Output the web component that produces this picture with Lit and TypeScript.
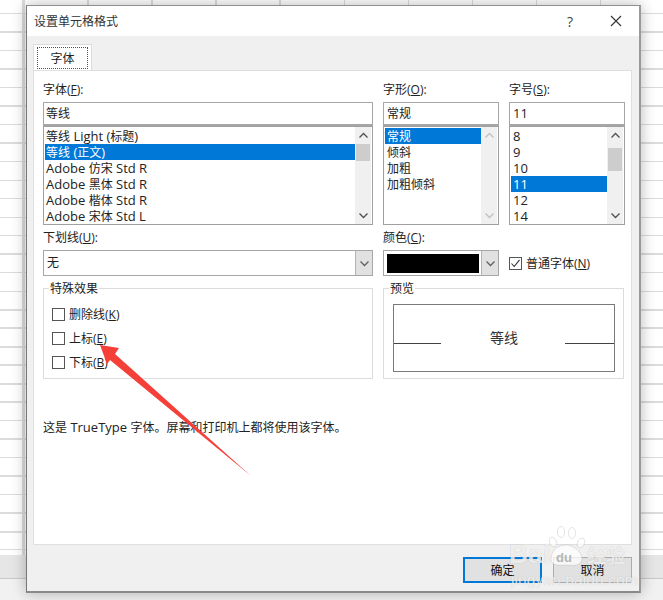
import { LitElement, html, css, svg } from "lit";
import { customElement } from "lit/decorators.js";

const chevron = (up: boolean, color = "#505050") => html`<svg class="chev" width="11" height="7" viewBox="0 0 11 7"><path d="${up ? "M1.5 5.5 L5.5 1.5 L9.5 5.5" : "M1.5 1.5 L5.5 5.5 L9.5 1.5"}" fill="none" stroke="${color}" stroke-width="1.3"/></svg>`;

const mixed = (t: string) =>
  (t.match(/[\x20-\x7e]+|[^\x20-\x7e]+/g) || []).map((run) =>
    /^[\x20-\x7e]/.test(run) ? html`<span class="lat">${run}</span>` : run
  );

@customElement("app-root")
export class AppRoot extends LitElement {
  static styles = css`
    :host {
      display: flex;
      box-sizing: border-box;
      position: relative;
      width: 663px;
      height: 600px;
      padding: 5px 22px 7px 26px;
      overflow: hidden;
      font-family: "Open Sans", "Noto Sans CJK SC", sans-serif;
      font-size: 12px;
      color: #222;
      background-color: #fff;
      background-image:
        linear-gradient(#f1f1f1, #f1f1f1),
        linear-gradient(#c8c8c8, #c8c8c8),
        linear-gradient(#e6e6e6, #e6e6e6),
        linear-gradient(#dcdcdc, #dcdcdc),
        repeating-linear-gradient(to bottom, transparent 0 13px, #dcdcdc 13px 14.5px, transparent 14.5px 18.5px);
      background-repeat: no-repeat;
      background-size: 100% 21px, 100% 1px, 100% 23px, 2px 555px, 100% 550px;
      background-position: 0 579px, 0 578px, 0 555px, 22px 0, 0 0;
    }
    .cols {
      position: absolute;
      inset: 0 0 45px 0;
      background-image: repeating-linear-gradient(to right, transparent 0 23px, #dcdcdc 23px 24.5px, transparent 24.5px 64.1px);
      pointer-events: none;
    }
    .lat { font-size: 13px; line-height: 1; }
    .dialog {
      position: relative;
      flex: 1;
      display: flex;
      flex-direction: column;
      background: #f0f0f0;
      border: 1px solid #8f8f8f;
      border-left-color: #777;
      border-bottom: 2px solid #8a8a8a;
      border-right: 2px solid #9a9a9a;
      box-shadow: 0 0 14px rgba(0, 0, 0, 0.28);
    }
    .titlebar {
      height: 30px;
      background: #fff;
      display: flex;
      align-items: center;
      padding: 0 17px 0 7px;
      color: #333;
    }
    .title { flex: 1; }
    .help { font-size: 14px; margin-right: 37px; color: #444; }
    .body { flex: 1; display: flex; flex-direction: column; padding: 8px 7px 0 6px; }
    .tabs { display: flex; height: 26px; }
    .tab {
      box-sizing: border-box;
      width: 59px;
      height: 26px;
      margin-bottom: -1px;
      background: #fff;
      border: 1px solid #dcdcdc;
      border-bottom: none;
      padding: 2px 3px 1px;
      position: relative;
      z-index: 1;
    }
    .tab span {
      display: flex;
      box-sizing: border-box;
      align-items: center;
      justify-content: center;
      width: 51px;
      height: 22px;
      border: 1px dotted #555;
    }
    .panel {
      box-sizing: border-box;
      height: 475px;
      background: #fff;
      border: 1px solid #dfdfdf;
      padding: 11px 0 0 9px;
    }
    .grid {
      display: grid;
      grid-template-columns: 330px 116px 116px;
      column-gap: 10px;
    }
    .label { line-height: 16px; height: 20px; white-space: nowrap; }
    .input {
      box-sizing: border-box;
      height: 24px;
      border: 1px solid #a6a6a6;
      border-bottom-width: 2px;
      padding-left: 3px;
      line-height: 21px;
    }
    .col1 .input { padding-left: 2px; }
    .list {
      box-sizing: border-box;
      height: 99px;
      border: 1px solid #a0a0a0;
      padding: 1px;
      display: flex;
    }
    .items { flex: 1; min-width: 0; }
    .item { height: 14px; padding-top: 2px; line-height: 14px; padding-left: 1px; white-space: nowrap; }
    .col2 .item, .col3 .item { padding-left: 2px; }
    .item.sel { background: #0078d7; color: #fff; }
    .sb {
      width: 16px;
      background: #f0f0f0;
      display: flex;
      flex-direction: column;
      align-items: stretch;
      margin: -1px 0 -1px 0;
    }
    .sb .arr { height: 17px; display: flex; align-items: center; justify-content: center; flex: none; }
    .sb .track { flex: 1; position: relative; }
    .thumb { background: #cdcdcd; height: 17px; margin: 0 1px; }
    .col3 .thumb { height: 23px; margin-top: 4px; }
    .select {
      box-sizing: border-box;
      height: 26px;
      border: 1px solid #a6a6a6;
      display: flex;
      align-items: center;
    }
    .select .val { flex: 1; padding-left: 3px; line-height: 24px; }
    .drop {
      box-sizing: border-box;
      width: 17px;
      height: 24px;
      background: #e1e1e1;
      border-left: 1px solid #b4b4b4;
      display: flex;
      align-items: center;
      justify-content: center;
    }
    .colorsel { background: #fff; }
    .swatch { flex: 1; height: 19px; background: #000; margin: 0 2px 0 3px; }
    .normal { display: flex; align-items: center; gap: 4px; height: 26px; }
    .box {
      box-sizing: border-box;
      width: 13px;
      height: 13px;
      border: 1px solid #555;
      background: #fff;
      display: flex;
      flex: none;
    }
    .row2 { margin-top: 5px; }
    .groups { display: grid; grid-template-columns: 330px 241px; column-gap: 10px; margin-top: 12px; }
    .group {
      box-sizing: border-box;
      position: relative;
      height: 91px;
      border: 1px solid #dcdcdc;
    }
    .legend {
      position: absolute;
      top: -8px;
      left: 5px;
      background: #fff;
      padding: 0 1px;
      line-height: 16px;
    }
    .checks { display: flex; flex-direction: column; padding: 17px 0 0 8px; gap: 8px; }
    .check { display: flex; align-items: center; gap: 4px; height: 16px; }
    .preview {
      box-sizing: border-box;
      height: 68px;
      margin: 15px 0 0 9px;
      width: 222px;
      border: 1px solid #7a7a7a;
      display: flex;
      align-items: center;
    }
    .rule { height: 1px; background: #444; width: 47px; margin-top: 11px; }
    .rule.r { width: 49px; }
    .sample { flex: 1; text-align: center; font-size: 14px; color: #333; margin-top: -3px; padding-left: 2px; }
    .note { margin-top: 40px; line-height: 18px; white-space: nowrap; }
    .footer { flex: 1; display: flex; justify-content: flex-end; gap: 11px; padding: 12px 0 0; }
    .btn {
      box-sizing: border-box;
      width: 79px;
      height: 26px;
      background: #e1e1e1;
      border: 1px solid #adadad;
      display: flex;
      align-items: center;
      justify-content: center;
      color: #111;
    }
    .btn.def { border: 2px solid #0078d7; }
    .arrow { position: absolute; left: 0; top: 0; pointer-events: none; }
    .wm { position: absolute; pointer-events: none; color: rgba(255, 255, 255, 0.72); white-space: nowrap; text-shadow: 0 0 1px rgba(120, 120, 120, 0.4); font-family: "Liberation Sans", "Noto Sans CJK SC", sans-serif; }
    .wm.bai { left: 509px; top: 539px; font-size: 26px; font-weight: 700; letter-spacing: 0.5px; }
    .wm.jy { left: 587px; top: 541px; font-size: 19px; font-weight: 700; }
    .wm.url { left: 511px; top: 571px; font-size: 15.5px; letter-spacing: 0.1px; }
    .wm.du { left: 556px; top: 550px; font-size: 13px; font-weight: 700; color: rgba(165, 165, 165, 0.8); text-shadow: none; }
  `;

  private scroll(thumb: boolean, disabled = false) {
    const c = disabled ? "#c0c0c0" : "#505050";
    return html`<div class="sb">
      <div class="arr">${chevron(true, c)}</div>
      <div class="track">${thumb ? html`<div class="thumb"></div>` : ""}</div>
      <div class="arr">${chevron(false, c)}</div>
    </div>`;
  }

  private items(list: string[], sel: number) {
    return html`<div class="items">${list.map((t, i) => html`<div class="item ${i === sel ? "sel" : ""}">${mixed(t)}</div>`)}</div>`;
  }

  render() {
    return html`
      <div class="cols"></div>
      <div class="dialog">
        <div class="titlebar">
          <span class="title">设置单元格格式</span>
          <span class="help">?</span>
          <svg width="12" height="12" viewBox="0 0 12 12"><path d="M1 1 L11 11 M11 1 L1 11" stroke="#333" stroke-width="1.1" fill="none"/></svg>
        </div>
        <div class="body">
          <div class="tabs"><div class="tab"><span>字体</span></div></div>
          <div class="panel">
            <div class="grid">
              <div class="col1">
                <div class="label">字体(<u>F</u>):</div>
                <div class="input">等线</div>
                <div class="list">
                  ${this.items(["等线 Light (标题)", "等线 (正文)", "Adobe 仿宋 Std R", "Adobe 黑体 Std R", "Adobe 楷体 Std R", "Adobe 宋体 Std L"], 1)}
                  ${this.scroll(true)}
                </div>
              </div>
              <div class="col2">
                <div class="label">字形(<u>O</u>):</div>
                <div class="input">常规</div>
                <div class="list">
                  ${this.items(["常规", "倾斜", "加粗", "加粗倾斜"], 0)}
                  ${this.scroll(false, true)}
                </div>
              </div>
              <div class="col3">
                <div class="label">字号(<u>S</u>):</div>
                <div class="input"><span class="lat">11</span></div>
                <div class="list">
                  ${this.items(["8", "9", "10", "11", "12", "14"], 3)}
                  ${this.scroll(true)}
                </div>
              </div>
            </div>
            <div class="grid row2">
              <div>
                <div class="label">下划线(<u>U</u>):</div>
                <div class="select"><div class="val">无</div><div class="drop">${chevron(false, "#606060")}</div></div>
              </div>
              <div>
                <div class="label">颜色(<u>C</u>):</div>
                <div class="select colorsel"><div class="swatch"></div><div class="drop">${chevron(false, "#606060")}</div></div>
              </div>
              <div>
                <div class="label"></div>
                <div class="normal">
                  <span class="box"><svg width="11" height="11" viewBox="0 0 11 11"><path d="M1.5 5.5 L4.2 8.5 L9.5 1.8" fill="none" stroke="#333" stroke-width="1.1"/></svg></span>
                  <span>普通字体(<u>N</u>)</span>
                </div>
              </div>
            </div>
            <div class="groups">
              <div class="group">
                <span class="legend">特殊效果</span>
                <div class="checks">
                  <div class="check"><span class="box"></span><span>删除线(<u>K</u>)</span></div>
                  <div class="check"><span class="box"></span><span>上标(<u>E</u>)</span></div>
                  <div class="check"><span class="box"></span><span>下标(<u>B</u>)</span></div>
                </div>
              </div>
              <div class="group">
                <span class="legend">预览</span>
                <div class="preview">
                  <div class="rule"></div>
                  <div class="sample">等线</div>
                  <div class="rule r"></div>
                </div>
              </div>
            </div>
            <div class="note">${mixed("这是 TrueType 字体。屏幕和打印机上都将使用该字体。")}</div>
          </div>
          <div class="footer">
            <div class="btn def">确定</div>
            <div class="btn">取消</div>
          </div>
        </div>
      </div>
      <svg class="arrow" width="663" height="600" viewBox="0 0 663 600">
        <polygon points="100,345 119,348 115,354 251,476 110,360 107,364" fill="#f5403a"/>
        ${svg`<g fill="rgba(255,255,255,0.72)" stroke="rgba(130,130,130,0.35)" stroke-width="0.6">
          <ellipse cx="553" cy="542" rx="3.4" ry="5" transform="rotate(-25 553 542)"/>
          <ellipse cx="561" cy="532" rx="3.6" ry="5.5"/>
          <ellipse cx="572" cy="533" rx="3.6" ry="5.5"/>
          <ellipse cx="581" cy="543" rx="3.4" ry="5" transform="rotate(25 581 543)"/>
          <path d="M551 558 C552 549 559 545 566 545 C573 545 581 551 582 558 C582 566 573 566 566 565 C558 566 550 565 551 558 Z"/>
        </g>`}
      </svg>
      <div class="wm bai">Bai</div>
      <div class="wm jy">经验</div>
      <div class="wm url">jingyan.baidu.com</div>
      <div class="wm du">du</div>
    `;
  }
}
